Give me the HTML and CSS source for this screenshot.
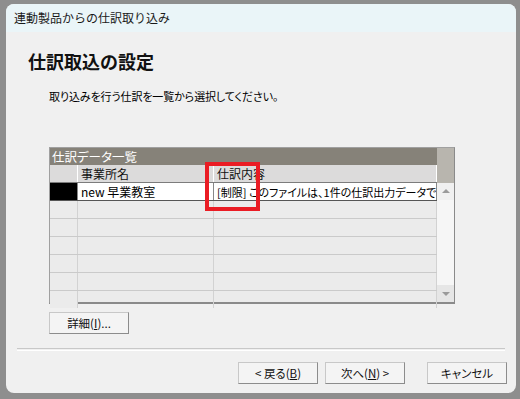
FILE: index.html
```html
<!DOCTYPE html>
<html lang="ja">
<head>
    <meta charset="UTF-8">
    <title>連動製品からの仕訳取り込み</title>
    <link rel="stylesheet" href="styles.css">
</head>
<body>

<div class="window">
    <div class="titlebar">連動製品からの仕訳取り込み</div>
    <div class="content">
        <h2>仕訳取込の設定</h2>
        <p class="lead">取り込みを行う仕訳を一覧から選択してください。</p>

        <div class="grid-box">
            <div class="grid-main">
                <div class="caption">仕訳データ一覧</div>
                <table class="grid">
                    <tr class="head">
                        <td class="rh"></td>
                        <td class="c1">事業所名</td>
                        <td class="c2">仕訳内容</td>
                    </tr>
                    <tr class="sel">
                        <td class="rh"></td>
                        <td class="c1">new 早業教室</td>
                        <td class="c2">[制限] このファイルは、1件の仕訳出力データで</td>
                    </tr>
                    <tr><td class="rh"></td><td></td><td></td></tr>
                    <tr><td class="rh"></td><td></td><td></td></tr>
                    <tr><td class="rh"></td><td></td><td></td></tr>
                    <tr><td class="rh"></td><td></td><td></td></tr>
                    <tr><td class="rh"></td><td></td><td></td></tr>
                    <tr class="last"><td class="rh"></td><td></td><td></td></tr>
                </table>
                <div class="mark"></div>
            </div>
            <div class="vscroll">
                <div class="corner"></div>
                <div class="arrow up"></div>
                <div class="track"></div>
                <div class="arrow down"></div>
            </div>
        </div>

        <button class="btn detail">詳細(<u>I</u>)...</button>

        <div class="sep"></div>

        <div class="footer">
            <button class="btn">&lt; 戻る(<u>B</u>)</button>
            <button class="btn">次へ(<u>N</u>) &gt;</button>
            <button class="btn cancel">キャンセル</button>
        </div>
    </div>
</div>

</body>
</html>
```

FILE: styles.css
```css
html, body {
    margin: 0;
    padding: 0;
}
body {
    background: #8e8e8e;
    width: 520px;
    height: 399px;
    overflow: hidden;
    font-family: "Noto Sans CJK JP", "Noto Sans", sans-serif;
    font-size: 12px;
    color: #000;
}
.window {
    margin: 4px 0 0 6px;
    width: 510px;
    height: 389px;
    background: #f0f0f0;
    border-radius: 8px;
    overflow: hidden;
    display: flex;
    flex-direction: column;
}
.titlebar {
    height: 28px;
    line-height: 27px;
    background: #eaf5f8;
    padding-left: 8px;
    font-size: 12px;
    color: #1a1a1a;
}
.content {
    padding: 0 0 0 11px;
    position: relative;
}
h2 {
    margin: 16px 0 0 11px;
    font-size: 18px;
    line-height: 26px;
    font-weight: bold;
    color: #111;
}
.lead {
    margin: 13px 0 0 32px;
    line-height: 18px;
    font-size: 11px;
    font-feature-settings: "palt";
    letter-spacing: -0.1px;
}
.grid-box {
    margin: 42px 0 0 32px;
    width: 406px;
    height: 157px;
    display: flex;
    border-top: 1px solid #a0a0a0;
    border-left: 1px solid #a0a0a0;
    border-right: 1px solid #8a8a8a;
    border-bottom: 2px solid #8a8a8a;
    box-sizing: border-box;
    background: #ebebeb;
}
.grid-main {
    width: 387px;
    position: relative;
    font-feature-settings: "palt";
}
.caption {
    height: 17px;
    line-height: 17px;
    background: #868279;
    color: #fff;
    padding-left: 2px;
    font-size: 12.5px;
}
.grid {
    border-collapse: collapse;
    width: 387px;
    table-layout: fixed;
}
.grid td {
    height: 17px;
    padding: 0 0 0 3px;
    border-right: 1px solid #d2d2d2;
    border-bottom: 1px solid #cacaca;
    white-space: nowrap;
    overflow: hidden;
    line-height: 16px;
    font-size: 11px;
}
.grid .rh {
    width: 24px;
    background: #ebebeb;
}
.grid .c1 {
    width: 132px;
}
.grid .head td {
    background: #dcdbdb;
    border-bottom: 1px solid #7c7c7c;
    border-right: 1px solid #ffffff;
    color: #111;
    font-size: 12px;
}
.grid .sel td {
    background: #fff;
    border-bottom: 1px solid #555;
    border-right: 1px solid #888;
}
.grid .sel .c1 {
    font-size: 12px;
}
.grid .sel .rh {
    background: #000;
}
.grid .last td {
    border-bottom: none;
}
.mark {
    position: absolute;
    left: 155px;
    top: 14px;
    width: 47px;
    height: 41px;
    border: 4px solid #ea1c24;
}
.vscroll {
    width: 17px;
    display: flex;
    flex-direction: column;
    background: #f6f6f6;
}
.corner {
    height: 35px;
    background: #b8b5ae;
}
.arrow {
    height: 17px;
    background: #f0f0f0;
    position: relative;
}
.arrow::after {
    content: "";
    position: absolute;
    left: 5px;
    width: 0;
    height: 0;
    border-left: 4px solid transparent;
    border-right: 4px solid transparent;
}
.arrow.up::after {
    top: 6px;
    border-bottom: 4px solid #9a9a9a;
}
.arrow.down {
    background: #e6e6e6;
}
.arrow.down::after {
    top: 7px;
    border-top: 4px solid #9a9a9a;
}
.track {
    flex: 1;
}
.btn {
    font-family: "Noto Sans CJK JP", "Noto Sans", sans-serif;
    font-size: 11.5px;
    font-feature-settings: "palt";
    color: #111;
    background: #f4f4f4;
    border: 1px solid #c8c8c8;
    border-right-color: #8c8c8c;
    border-bottom-color: #8c8c8c;
    height: 22px;
    width: 80px;
    padding: 0;
    line-height: 18px;
}
.btn u {
    text-decoration: underline;
}
.detail {
    display: block;
    margin: 8px 0 0 32px;
}
.sep {
    margin: 14px 0 0 0;
    width: 488px;
    height: 1px;
    border-top: 1px solid #c8c8c8;
    border-bottom: 1px solid #ffffff;
}
.footer {
    margin: 11px 0 0 221px;
    display: flex;
    gap: 7px;
}
.footer .cancel {
    margin-left: 15px;
}
```
